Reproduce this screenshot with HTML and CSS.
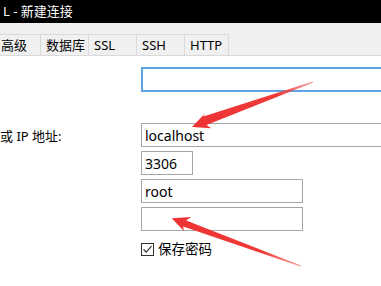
FILE: index.html
```html
<!DOCTYPE html>
<html lang="zh-CN">
<head>
    <meta charset="UTF-8">
    <title>新建连接</title>
    <link rel="stylesheet" href="styles.css">
</head>
<body>
    <div class="window">
        <div class="titlebar">L - 新建连接</div>

        <div class="tabs">
            <div class="tab tab-first">高级</div>
            <div class="tab">数据库</div>
            <div class="tab">SSL</div>
            <div class="tab">SSH</div>
            <div class="tab tab-last">HTTP</div>
        </div>

        <div class="panel">
            <div class="row">
                <span class="label"></span>
                <input type="text" class="field field-wide field-focus">
            </div>
            <div class="row row-host">
                <label class="label" for="host">或 IP 地址:</label>
                <input type="text" id="host" class="field field-wide" value="localhost">
            </div>
            <div class="row">
                <span class="label"></span>
                <input type="text" class="field field-port" value="3306">
            </div>
            <div class="row">
                <span class="label"></span>
                <input type="text" class="field field-mid" value="root">
            </div>
            <div class="row">
                <span class="label"></span>
                <input type="password" class="field field-mid">
            </div>
            <div class="row row-check">
                <span class="label"></span>
                <span class="checkbox">
                    <svg width="13" height="13" viewBox="0 0 13 13">
                        <rect x="0.5" y="0.5" width="12" height="12" fill="#fff" stroke="#333"/>
                        <path d="M2.5 6.5 L5.2 9.2 L10.5 3.2" fill="none" stroke="#333" stroke-width="1.2"/>
                    </svg>
                </span>
                <span class="check-text">保存密码</span>
            </div>
        </div>

        <!-- red annotation arrows drawn over the dialog -->
        <svg class="arrows" width="381" height="286" viewBox="0 0 381 286">
            <defs>
                <linearGradient id="fadeA" x1="313" y1="82" x2="192" y2="127" gradientUnits="userSpaceOnUse">
                    <stop offset="0" stop-color="#f25c5c" stop-opacity="0.6"/>
                    <stop offset="0.3" stop-color="#ef3a3a"/>
                    <stop offset="1" stop-color="#ee3333"/>
                </linearGradient>
                <linearGradient id="fadeB" x1="301" y1="266" x2="172" y2="218" gradientUnits="userSpaceOnUse">
                    <stop offset="0" stop-color="#f25c5c" stop-opacity="0.6"/>
                    <stop offset="0.3" stop-color="#ef3a3a"/>
                    <stop offset="1" stop-color="#ee3333"/>
                </linearGradient>
            </defs>
            <polygon fill="url(#fadeA)" points="192,127 211.3,128.2 206.5,124.9 313.3,82.6 312.7,81.4 203.4,116.5 204.9,113.6"/>
            <polygon fill="url(#fadeB)" points="171.7,218.3 191.1,217 186.2,220.5 301,265.4 300.4,266.6 183.1,226.6 183.9,231.1"/>
        </svg>
    </div>
</body>
</html>
```

FILE: styles.css
```css
body {
    margin: 0;
    font-family: "Noto Sans", "Noto Sans CJK SC", sans-serif;
    font-size: 13px;
    color: #000;
    background: #fff;
}
.window {
    position: relative;
    width: 381px;
    height: 286px;
    overflow: hidden;
    background: #fff;
}
.titlebar {
    height: 23px;
    line-height: 23px;
    padding-left: 3px;
    background: #000;
    color: #fff;
    white-space: nowrap;
}
.tabs {
    display: flex;
    height: 33px;
    box-sizing: border-box;
    padding-top: 11px;
    background: #f0f0f0;
    border-bottom: 1px solid #dadada;
}
.tab {
    width: 48px;
    box-sizing: border-box;
    padding-left: 5px;
    line-height: 20px;
    border-top: 1px solid #dadada;
    border-left: 1px solid #dadada;
    white-space: nowrap;
}
.tab-first {
    margin-left: -8px;
    padding-left: 8px;
}
.tab-last {
    width: 45px;
    border-right: 1px solid #dadada;
}
.panel {
    padding-top: 11px;
}
.row {
    display: flex;
    align-items: center;
    margin-top: 4px;
    white-space: nowrap;
}
.row:first-child {
    margin-top: 0;
}
.row-host {
    margin-top: 31px;
}
.row-check {
    margin-top: 12px;
}
.label {
    flex: 0 0 141px;
}
.field {
    flex: none;
    height: 24px;
    box-sizing: border-box;
    padding: 0 3px;
    border: 1px solid #a5a5a5;
    font-family: inherit;
    font-size: 14px;
    color: #000;
    background: #fff;
    outline: none;
}
.field-focus {
    height: 25px;
    border: 2px solid #5ea3e6;
}
.field-wide {
    width: 260px;
}
.field-port {
    width: 52px;
}
.field-mid {
    width: 162px;
}
.checkbox {
    display: flex;
    width: 13px;
    height: 13px;
}
.check-text {
    margin-left: 4px;
    font-size: 13.5px;
    line-height: 13px;
}
.arrows {
    position: absolute;
    left: 0;
    top: 0;
}
```
